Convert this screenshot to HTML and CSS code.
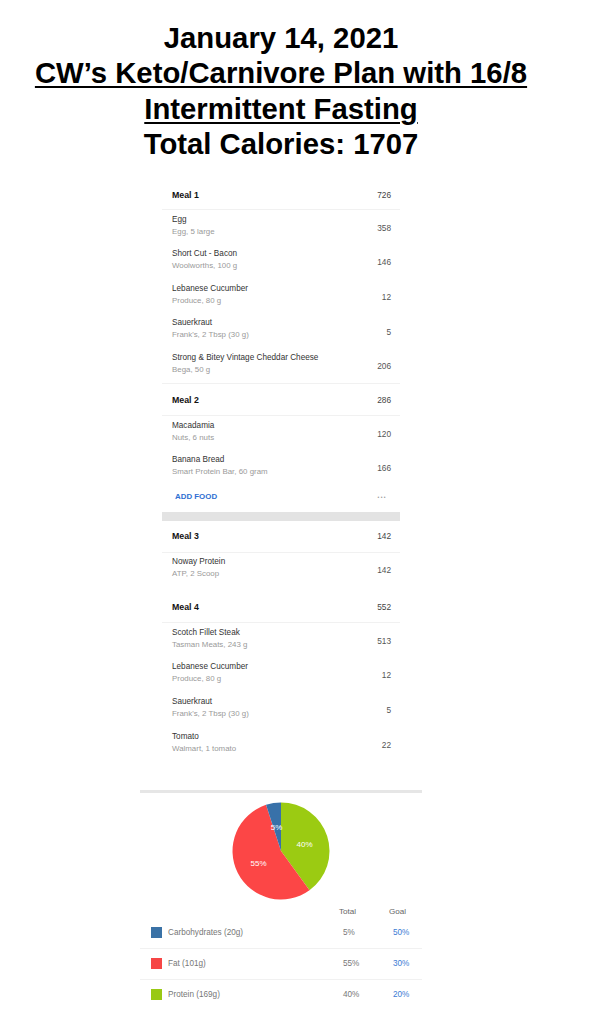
FILE: index.html
```html
<!DOCTYPE html>
<html lang="en">
<head>
<meta charset="utf-8">
<title>January 14, 2021 – CW’s Keto/Carnivore Plan</title>
<link rel="stylesheet" href="styles.css">
</head>
<body>
<div class="page">
  <h1 class="title">January 14, 2021<br><u>CW’s Keto/Carnivore Plan with 16/8<br>Intermittent Fasting</u><br>Total Calories: 1707</h1>

  <div class="diary">
    <section class="meal meal-1">
      <div class="meal-head"><span>Meal 1</span><span class="meal-cal">726</span></div>
      <div class="food"><div><div class="food-name">Egg</div><div class="food-sub">Egg, 5 large</div></div><div class="food-cal">358</div></div>
      <div class="food"><div><div class="food-name">Short Cut - Bacon</div><div class="food-sub">Woolworths, 100 g</div></div><div class="food-cal">146</div></div>
      <div class="food"><div><div class="food-name">Lebanese Cucumber</div><div class="food-sub">Produce, 80 g</div></div><div class="food-cal">12</div></div>
      <div class="food"><div><div class="food-name">Sauerkraut</div><div class="food-sub">Frank's, 2 Tbsp (30 g)</div></div><div class="food-cal">5</div></div>
      <div class="food"><div><div class="food-name">Strong &amp; Bitey Vintage Cheddar Cheese</div><div class="food-sub">Bega, 50 g</div></div><div class="food-cal">206</div></div>
    </section>

    <section class="meal">
      <div class="meal-head"><span>Meal 2</span><span class="meal-cal">286</span></div>
      <div class="food"><div><div class="food-name">Macadamia</div><div class="food-sub">Nuts, 6 nuts</div></div><div class="food-cal">120</div></div>
      <div class="food"><div><div class="food-name">Banana Bread</div><div class="food-sub">Smart Protein Bar, 60 gram</div></div><div class="food-cal">166</div></div>
      <div class="add-row"><span class="add-food">ADD FOOD</span><span class="more">•••</span></div>
    </section>

    <div class="gap-bar"></div>

    <section class="meal">
      <div class="meal-head"><span>Meal 3</span><span class="meal-cal">142</span></div>
      <div class="food"><div><div class="food-name">Noway Protein</div><div class="food-sub">ATP, 2 Scoop</div></div><div class="food-cal">142</div></div>
    </section>

    <section class="meal meal-4">
      <div class="meal-head"><span>Meal 4</span><span class="meal-cal">552</span></div>
      <div class="food"><div><div class="food-name">Scotch Fillet Steak</div><div class="food-sub">Tasman Meats, 243 g</div></div><div class="food-cal">513</div></div>
      <div class="food"><div><div class="food-name">Lebanese Cucumber</div><div class="food-sub">Produce, 80 g</div></div><div class="food-cal">12</div></div>
      <div class="food"><div><div class="food-name">Sauerkraut</div><div class="food-sub">Frank's, 2 Tbsp (30 g)</div></div><div class="food-cal">5</div></div>
      <div class="food"><div><div class="food-name">Tomato</div><div class="food-sub">Walmart, 1 tomato</div></div><div class="food-cal">22</div></div>
    </section>
  </div>

  <div class="macros">
    <div class="macros-rule"></div>
    <svg class="pie" width="98" height="98" viewBox="0 0 98 98" aria-label="Macronutrient pie chart">
      <path d="M49 49 L49 0.5 A48.5 48.5 0 0 1 77.51 88.24 Z" fill="#9bcb12"/>
      <path d="M49 49 L77.51 88.24 A48.5 48.5 0 1 1 34.01 2.87 Z" fill="#fc4646"/>
      <path d="M49 49 L34.01 2.87 A48.5 48.5 0 0 1 49 0.5 Z" fill="#3871a9"/>
      <text x="44.5" y="28" class="pie-label" text-anchor="middle">5%</text>
      <text x="72.5" y="45" class="pie-label" text-anchor="middle">40%</text>
      <text x="26.5" y="64" class="pie-label" text-anchor="middle">55%</text>
    </svg>

    <div class="macro-table">
      <div class="macro-row macro-headrow">
        <span></span><span class="th">Total</span><span class="th">Goal</span>
      </div>
      <div class="macro-row">
        <span class="macro-name"><i class="swatch swatch-carb"></i>Carbohydrates (20g)</span>
        <span class="macro-total">5%</span><span class="macro-goal">50%</span>
      </div>
      <div class="macro-row">
        <span class="macro-name"><i class="swatch swatch-fat"></i>Fat (101g)</span>
        <span class="macro-total">55%</span><span class="macro-goal">30%</span>
      </div>
      <div class="macro-row last">
        <span class="macro-name"><i class="swatch swatch-protein"></i>Protein (169g)</span>
        <span class="macro-total">40%</span><span class="macro-goal">20%</span>
      </div>
    </div>
  </div>
</div>
</body>
</html>
```

FILE: styles.css
```css
* { box-sizing: border-box; }

html, body {
  margin: 0;
  padding: 0;
  background: #ffffff;
}

body {
  font-family: "Liberation Sans", Arial, sans-serif;
  color: #222;
}

.page {
  width: 562px;
  padding-top: 20px;
  display: flex;
  flex-direction: column;
  align-items: center;
}

.title {
  margin: 0;
  font-size: 29.3px;
  line-height: 35.3px;
  font-weight: 700;
  text-align: center;
  color: #000;
}

.title u {
  text-decoration-thickness: 1.5px;
  text-underline-offset: 3px;
}

/* ---------- diary card ---------- */
.diary {
  width: 238px;
  margin-top: 19px;
  display: flex;
  flex-direction: column;
}

.meal {
  display: flex;
  flex-direction: column;
}

.meal-1 {
  border-bottom: 1px solid #f1f1f1;
}

.meal-head {
  height: 32px;
  padding: 0 9px 0 10px;
  display: flex;
  align-items: center;
  justify-content: space-between;
  border-bottom: 1px solid #f1f1f1;
  font-size: 8.8px;
  font-weight: 700;
  color: #111;
}

.meal-1 .meal-head {
  height: 30px;
}

.meal-4 {
  margin-top: 4px;
}

.meal-cal {
  font-weight: 400;
  font-size: 8.3px;
  color: #444;
}

.food {
  height: 34.6px;
  padding: 3.5px 9px 0 10px;
  display: flex;
  align-items: flex-start;
  justify-content: space-between;
}

.food-name {
  font-size: 8.2px;
  line-height: 12px;
  color: #333;
}

.food-sub {
  font-size: 7.9px;
  line-height: 12px;
  color: #9a9a9a;
}

.food-cal {
  align-self: center;
  margin-top: -3px;
  font-size: 8.3px;
  color: #555;
}

.add-row {
  height: 26.4px;
  padding: 0 13px 4px 13px;
  display: flex;
  align-items: center;
  justify-content: space-between;
}

.add-food {
  font-size: 7.9px;
  font-weight: 700;
  color: #2f6fd2;
}

.more {
  font-size: 5px;
  letter-spacing: 1.4px;
  color: #9a9a9a;
}

.gap-bar {
  height: 9px;
  background: #e3e3e3;
}

/* ---------- macros ---------- */
.macros {
  width: 282px;
  margin-top: 28px;
  display: flex;
  flex-direction: column;
  align-items: center;
}

.macros-rule {
  align-self: stretch;
  height: 3px;
  background: #e6e6e6;
}

.pie {
  display: block;
  margin-top: 9px;
}

.pie-label {
  font-family: "Liberation Sans", Arial, sans-serif;
  font-size: 8px;
  fill: #ffffff;
}

.macro-table {
  align-self: stretch;
  display: flex;
  flex-direction: column;
}

.macro-row {
  display: grid;
  grid-template-columns: 188px 50px 1fr;
  align-items: center;
  height: 31px;
  padding-left: 11px;
  border-bottom: 1px solid #f1f1f1;
  font-size: 8.2px;
  color: #777;
}

.macro-row.last {
  border-bottom: none;
  height: 30px;
}

.macro-headrow {
  height: 18px;
  padding-top: 6px;
  align-items: start;
  border-bottom: none;
  line-height: 12px;
}

.th {
  color: #666;
  font-size: 8.1px;
}

.macro-name {
  display: flex;
  align-items: center;
  gap: 6px;
}

.swatch {
  display: block;
  width: 11px;
  height: 11px;
}

.swatch-carb { background: #3a72a6; }
.swatch-fat { background: #f64646; }
.swatch-protein { background: #99c914; }

.macro-total {
  padding-left: 4px;
  color: #777;
}

.macro-goal {
  padding-left: 4px;
  color: #3b7bd4;
}
```
